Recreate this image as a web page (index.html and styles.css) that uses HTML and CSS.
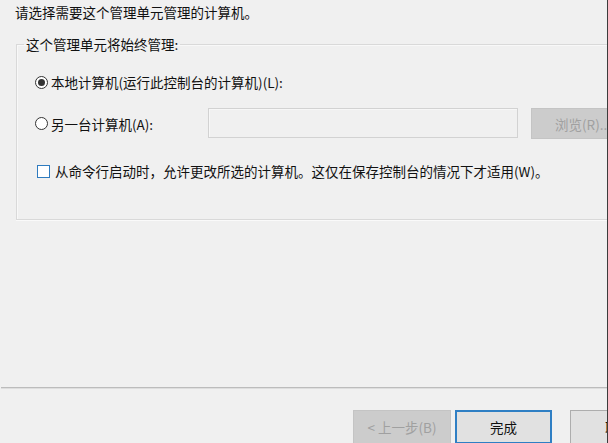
FILE: index.html
```html
<!DOCTYPE html>
<html lang="zh-CN">
<head>
<meta charset="utf-8">
<title>选择计算机</title>
<link rel="stylesheet" href="styles.css">
</head>
<body>
<div class="page">
  <p class="intro">请选择需要这个管理单元管理的计算机。</p>
  <fieldset class="group">
    <legend class="group-title">这个管理单元将始终管理:</legend>
    <div class="row row-local">
      <span class="radio checked"></span>
      <span class="label">本地计算机(运行此控制台的计算机)(L):</span>
    </div>
    <div class="row row-other">
      <div class="other-label">
        <span class="radio"></span>
        <span class="label">另一台计算机(A):</span>
      </div>
      <div class="textbox"></div>
      <div class="btn btn-disabled btn-browse">浏览(R)...</div>
    </div>
    <div class="row row-check">
      <span class="checkbox"></span>
      <span class="label">从命令行启动时，允许更改所选的计算机。这仅在保存控制台的情况下才适用(W)。</span>
    </div>
  </fieldset>
  <div class="separator"></div>
  <div class="buttons">
    <div class="btn btn-disabled btn-back">&lt; 上一步(B)</div>
    <div class="btn btn-default">完成</div>
    <div class="btn btn-cancel">取消</div>
  </div>
</div>
</body>
</html>
```

FILE: styles.css
```css
html, body {
  margin: 0;
  padding: 0;
  background: #f0f0f0;
}

body {
  width: 608px;
  height: 443px;
  overflow: hidden;
}

.page {
  width: 607px;
  height: 443px;
  overflow: hidden;
  background: #f0f0f0;
  border-right: 1px solid #3c3c3c;
  font-family: "Noto Sans CJK SC", "Noto Sans", sans-serif;
  font-size: 13.5px;
  line-height: 16px;
  color: #111;
}

.intro {
  margin: 0;
  padding: 4px 0 0 15px;
  height: 16px;
  white-space: nowrap;
}

.group {
  margin: 16px -30px 0 16px;
  padding: 20px 0 38px 7px;
  border: 1px solid #d9d9d9;
  box-shadow: 0 1px 0 #fafafa, inset 1px 1px 0 #f8f8f8;
  min-width: 0;
}

.group-title {
  padding: 0 2px;
  white-space: nowrap;
}

.row {
  display: flex;
  align-items: center;
  margin-left: 11px;
  white-space: nowrap;
}

.row-local {
  height: 20px;
}

.row-other {
  height: 31px;
  margin-top: 16px;
}

.row-check {
  height: 20px;
  margin-top: 22px;
}

.other-label {
  display: flex;
  align-items: center;
  width: 173px;
  flex: none;
}

.radio {
  width: 11px;
  height: 11px;
  border: 1px solid #333;
  border-radius: 50%;
  background: #fff;
  display: flex;
  align-items: center;
  justify-content: center;
  flex: none;
  margin-right: 3px;
}

.radio.checked::after {
  content: "";
  width: 7px;
  height: 7px;
  border-radius: 50%;
  background: #333;
}

.checkbox {
  width: 11px;
  height: 11px;
  border: 1px solid #2f7bbf;
  background: #fff;
  margin-left: 2px;
  margin-right: 5px;
  flex: none;
}

.textbox {
  width: 308px;
  height: 28px;
  border: 1px solid #d2d2d2;
  background: #f0f0f0;
  box-shadow: inset 1px 1px 0 #f7f7f7;
  flex: none;
  align-self: flex-start;
}

.btn {
  box-sizing: border-box;
  display: flex;
  align-items: center;
  justify-content: center;
  flex: none;
  white-space: nowrap;
}

.btn-browse {
  margin-left: 13px;
  width: 97px;
  height: 31px;
  justify-content: flex-start;
  padding-left: 23px;
}

.btn-disabled {
  background: #cccccc;
  border: 1px solid #c4c4c4;
  color: #a0a0a0;
}

.separator {
  margin-top: 167px;
  margin-left: 1px;
  height: 1px;
  border-top: 1px solid #bcbcbc;
  background: #dedede;
}

.buttons {
  display: flex;
  margin-top: 21px;
  padding-left: 353px;
}

.btn-back {
  width: 98px;
  height: 34px;
  padding-bottom: 1px;
}

.btn-default {
  width: 97px;
  height: 34px;
  margin-left: 4px;
  background: #e1e1e1;
  border: 2px solid #2f7fc4;
  color: #111;
  padding-bottom: 1px;
}

.btn-cancel {
  width: 97px;
  height: 34px;
  margin-left: 18px;
  background: #e1e1e1;
  border: 1px solid #adadad;
  color: #111;
  padding-bottom: 1px;
}
```
